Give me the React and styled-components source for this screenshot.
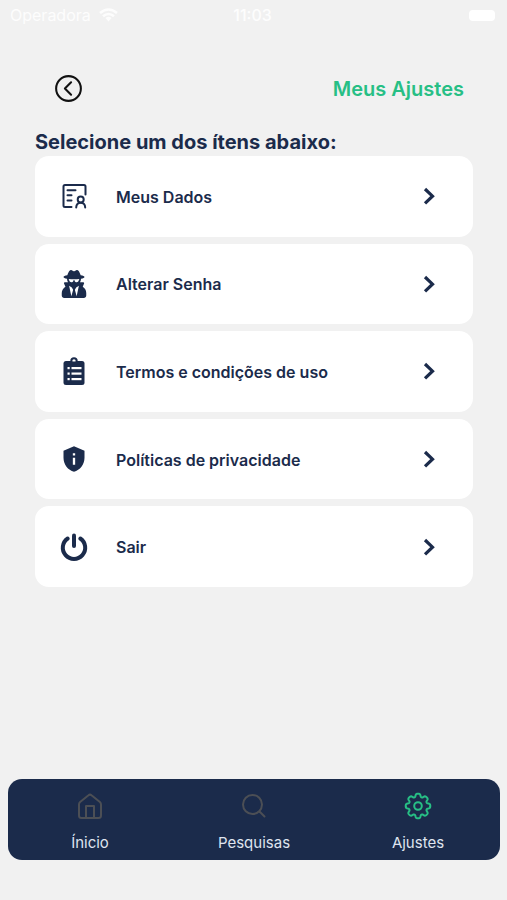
import React from "react";
import styled, { createGlobalStyle } from "styled-components";
import { FaUserSecret } from "react-icons/fa";
import { MdPrivacyTip } from "react-icons/md";
import { IoChevronBackCircleOutline } from "react-icons/io5";

const navy = "#1b2b4b";
const green = "#27bf85";

const GlobalStyle = createGlobalStyle`
  * { box-sizing: border-box; }
  body {
    margin: 0;
    background: #f1f1f1;
    color: ${navy};
    font-family: "Inter", "Liberation Sans", sans-serif;
  }
  button { font: inherit; color: inherit; border: 0; background: none; padding: 0; cursor: pointer; }
`;

const Screen = styled.div`
  display: flex;
  flex-direction: column;
  min-height: 100vh;
`;

const StatusBar = styled.div`
  display: grid;
  grid-template-columns: 1fr auto 1fr;
  align-items: center;
  height: 30px;
  padding: 0 12px 0 10px;
  color: #fdfdfd;
  font-size: 16px;
  line-height: 20px;
`;

const Carrier = styled.span`
  display: flex;
  align-items: center;
  gap: 8px;
`;

const Clock = styled.time`
  font-weight: 500;
`;

const Battery = styled.span`
  justify-self: end;
  width: 26px;
  height: 11px;
  border-radius: 4px;
  background: #ffffff;
`;

const Header = styled.header`
  display: flex;
  align-items: center;
  justify-content: space-between;
  margin-top: 42px;
  padding: 0 43px 0 52px;
  height: 33px;
`;

const BackButton = styled.button`
  display: flex;
  color: #111111;
`;

const Title = styled.h1`
  margin: 0;
  color: ${green};
  font-size: 20px;
  line-height: 28px;
  font-weight: 600;
`;

const Main = styled.main`
  flex: 1;
  padding: 24px 34px 24px 35px;
`;

const Prompt = styled.h2`
  margin: 0;
  font-size: 20px;
  line-height: 27px;
  font-weight: 700;
  white-space: nowrap;
`;

const Menu = styled.ul`
  display: grid;
  grid-auto-rows: 1fr;
  gap: 7px;
  min-height: 431px;
  margin: 0;
  padding: 0;
  list-style: none;
`;

const MenuItem = styled.li`
  display: flex;
`;

const Card = styled.button`
  display: grid;
  grid-template-columns: 28px 1fr 28px;
  column-gap: 28px;
  align-items: center;
  width: 100%;
  padding: 0 30px 0 25px;
  border-radius: 14px;
  background: #ffffff;
  text-align: left;
`;

const CardIcon = styled.span`
  display: flex;
  justify-content: center;
`;

const CardLabel = styled.span`
  padding-top: 1px;
  font-size: 16px;
  line-height: 24px;
  font-weight: 600;
`;

const TabBar = styled.nav`
  display: grid;
  grid-template-columns: repeat(3, 1fr);
  height: 81px;
  margin: 0 7px 40px 8px;
  border-radius: 14px;
  background: ${navy};
`;

const Tab = styled.button`
  display: flex;
  flex-direction: column;
  align-items: center;
  gap: 13px;
  padding-top: 13px;
  color: ${(p) => (p.$active ? green : "#4c4f55")};
`;

const TabLabel = styled.span`
  color: #dfe4ef;
  font-size: 15px;
  line-height: 20px;
`;

function WifiIcon() {
  return (
    <svg width="19" height="14" viewBox="0 0 19 14" fill="none" stroke="currentColor" strokeWidth="2.6" aria-hidden="true">
      <path d="M1 5 Q9.500 -2 18 5" />
      <path d="M4 8.300 Q9.500 3.700 15 8.300" />
      <path d="M6.500 10 Q9.500 7.500 12.500 10 L9.500 13.500 Z" fill="currentColor" stroke="none" />
    </svg>
  );
}

function DataIcon() {
  return (
    <svg width="26" height="26" viewBox="0 0 26 26" fill="none" stroke="currentColor" strokeWidth="2" strokeLinecap="round" strokeLinejoin="round" aria-hidden="true">
      <path d="M10.500 24H4a1.500 1.500 0 0 1-1.500-1.500v-19A1.500 1.500 0 0 1 4 2h19a1.500 1.500 0 0 1 1.500 1.500V11.500" />
      <path d="M6.500 7.200h8M6.500 12.200h4M6.500 17.500h4" />
      <circle cx="19.700" cy="16.500" r="3" />
      <path d="M15.200 24.500c0-6.500 9-6.500 9 0" />
    </svg>
  );
}

function ClipboardIcon() {
  return (
    <svg width="22" height="28" viewBox="0 0 22 28" fill="currentColor" aria-hidden="true">
      <rect x="0.500" y="4" width="21" height="24" rx="2.500" />
      <circle cx="11" cy="4" r="2.700" fill="#ffffff" stroke="currentColor" strokeWidth="2" />
      <rect x="6" y="4.500" width="10" height="3" />
      <g fill="#ffffff">
        <rect x="4.500" y="10" width="2.200" height="2.200" />
        <rect x="8.500" y="10" width="10" height="2.200" />
        <rect x="4.500" y="15.500" width="2.200" height="2.200" />
        <rect x="8.500" y="15.500" width="10" height="2.200" />
        <rect x="4.500" y="21" width="2.200" height="2.200" />
        <rect x="8.500" y="21" width="10" height="2.200" />
      </g>
    </svg>
  );
}

function PowerIcon() {
  return (
    <svg width="28" height="28" viewBox="0 0 28 28" fill="none" stroke="currentColor" strokeWidth="4" strokeLinecap="round" aria-hidden="true">
      <path d="M7.700 5.500 A11.200 11.200 0 1 0 20.300 5.500" />
      <path d="M14 2.500 V13" />
    </svg>
  );
}

function ChevronIcon() {
  return (
    <svg width="28" height="28" viewBox="0 0 28 28" fill="none" stroke="currentColor" strokeWidth="3.2" aria-hidden="true">
      <path d="M10 7 L17.500 14.200 L10 21.400" />
    </svg>
  );
}

function HomeIcon() {
  return (
    <svg width="28" height="28" viewBox="0 0 28 28" fill="none" stroke="currentColor" strokeWidth="2" strokeLinejoin="round" aria-hidden="true">
      <path d="M3 12.500 Q3 11 4.100 10 L12.500 3.300 Q14 2 15.500 3.300 L23.900 10 Q25 11 25 12.500 V23.500 Q25 26 22.500 26 H5.500 Q3 26 3 23.500 Z" />
      <path d="M10 26 V14 H18 V26" />
    </svg>
  );
}

function SearchIcon() {
  return (
    <svg width="28" height="28" viewBox="0 0 28 28" fill="none" stroke="currentColor" strokeWidth="2" strokeLinecap="round" aria-hidden="true">
      <circle cx="12.500" cy="12.500" r="9.500" />
      <path d="M19.500 19.500 L24.500 24.500" />
    </svg>
  );
}

const gearOutline = Array.from({ length: 192 }, (_, i) => {
  const angle = (i / 192) * Math.PI * 2;
  const radius = 10.7 + 1.6 * Math.tanh(1.8 * Math.cos(8 * angle) + 0.5);
  const x = (14 + radius * Math.cos(angle)).toFixed(2);
  const y = (14 + radius * Math.sin(angle)).toFixed(2);
  return `${x},${y}`;
}).join(" ");

function GearIcon() {
  return (
    <svg width="28" height="28" viewBox="0 0 28 28" fill="none" stroke="currentColor" strokeWidth="2" strokeLinejoin="round" aria-hidden="true">
      <polygon points={gearOutline} />
      <circle cx="14" cy="14" r="3.800" />
    </svg>
  );
}

const menuItems = [
  { label: "Meus Dados", icon: <DataIcon /> },
  { label: "Alterar Senha", icon: <FaUserSecret size={28} /> },
  { label: "Termos e condições de uso", icon: <ClipboardIcon /> },
  { label: "Políticas de privacidade", icon: <MdPrivacyTip size={28} /> },
  { label: "Sair", icon: <PowerIcon /> },
];

const tabs = [
  { label: "Ínicio", icon: <HomeIcon /> },
  { label: "Pesquisas", icon: <SearchIcon /> },
  { label: "Ajustes", icon: <GearIcon />, active: true },
];

export default function App() {
  return (
    <Screen>
      <GlobalStyle />
      <StatusBar>
        <Carrier>Operadora <WifiIcon /></Carrier>
        <Clock>11:03</Clock>
        <Battery />
      </StatusBar>
      <Header>
        <BackButton type="button" aria-label="Voltar">
          <IoChevronBackCircleOutline size={33} />
        </BackButton>
        <Title>Meus Ajustes</Title>
      </Header>
      <Main>
        <Prompt>Selecione um dos ítens abaixo:</Prompt>
        <Menu>
          {menuItems.map((item) => (
            <MenuItem key={item.label}>
              <Card type="button">
                <CardIcon>{item.icon}</CardIcon>
                <CardLabel>{item.label}</CardLabel>
                <ChevronIcon />
              </Card>
            </MenuItem>
          ))}
        </Menu>
      </Main>
      <TabBar>
        {tabs.map((tab) => (
          <Tab key={tab.label} type="button" $active={tab.active} aria-current={tab.active ? "page" : undefined}>
            {tab.icon}
            <TabLabel>{tab.label}</TabLabel>
          </Tab>
        ))}
      </TabBar>
    </Screen>
  );
}
